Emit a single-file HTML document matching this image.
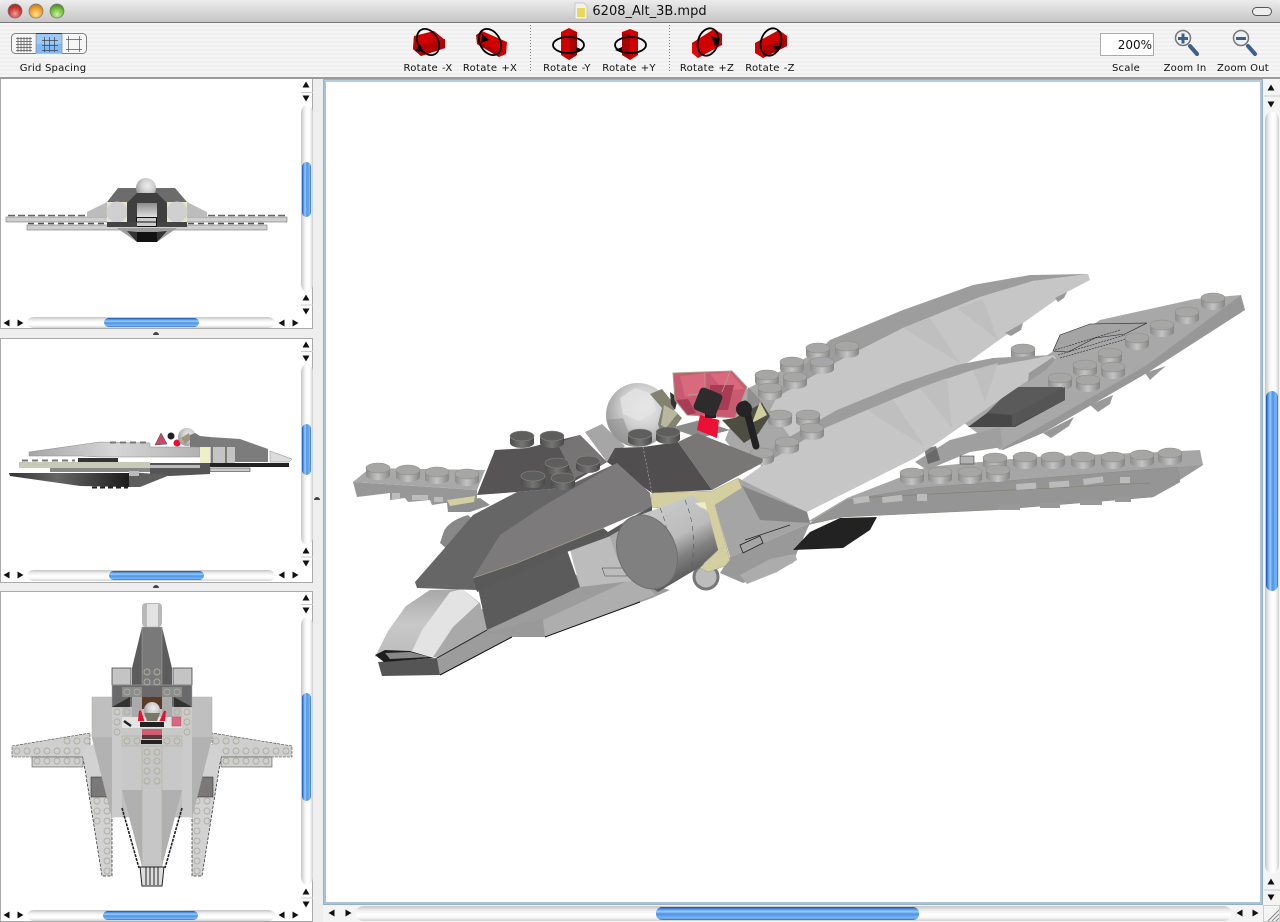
<!DOCTYPE html>
<html><head><meta charset="utf-8"><title>6208_Alt_3B.mpd</title>
<style>
html,body{margin:0;padding:0;background:#eee;}
body{width:1280px;height:922px;position:relative;overflow:hidden;font-family:"DejaVu Sans","Liberation Sans",sans-serif;}
.a{position:absolute}
.lbl{position:absolute;top:63px;font-size:10px;line-height:12px;color:#111;text-align:center;white-space:nowrap;transform:translateX(-50%);letter-spacing:.22px}
.rt{letter-spacing:.3px;word-spacing:.5px}
.vt{position:absolute;background:linear-gradient(90deg,#c4c4c4,#f0f0f0 30%,#fff 55%,#fafafa 75%,#d0d0d0);border-radius:6px/8px}
.ht{position:absolute;background:linear-gradient(180deg,#c4c4c4,#f0f0f0 30%,#fff 55%,#fafafa 75%,#d0d0d0);border-radius:8px/6px}
.vb{position:absolute;border-radius:6px;background:linear-gradient(90deg,#0f4fb5,#5f9fe8 20%,#9ccaf6 35%,#4d93e6 55%,#79baf8 85%,#2f6cc0);}
.hb{position:absolute;border-radius:6px;background:linear-gradient(180deg,#0f4fb5,#5f9fe8 20%,#9ccaf6 35%,#4d93e6 55%,#79baf8 85%,#2f6cc0);}
</style></head><body>
<div class="a" style="left:0;top:0;width:1280px;height:22px;background:linear-gradient(#ececec,#c6c6c6);border-bottom:1px solid #777;border-radius:6px 6px 0 0"></div>
<div class="a" style="left:0;top:23px;width:1280px;height:54px;background:repeating-linear-gradient(#f5f5f5 0,#f5f5f5 2px,#efefef 2px,#efefef 4px)"></div>
<div class="a" style="left:0;top:77px;width:1280px;height:2px;background:#9a9a9a"></div>
<div class="a" style="left:0;top:3px;width:1280px;text-align:center;font-size:13px;line-height:18px;color:#111"><span style="margin-left:19px">6208_Alt_3B.mpd</span></div>
<div class="lbl" style="left:53px">Grid Spacing</div>
<div class="lbl rt" style="left:428px">Rotate -X</div>
<div class="lbl rt" style="left:490px">Rotate +X</div>
<div class="lbl rt" style="left:567px">Rotate -Y</div>
<div class="lbl rt" style="left:629px">Rotate +Y</div>
<div class="lbl rt" style="left:707px">Rotate +Z</div>
<div class="lbl rt" style="left:770px">Rotate -Z</div>
<div class="lbl" style="left:1126px">Scale</div>
<div class="lbl" style="left:1185px">Zoom In</div>
<div class="lbl" style="left:1243px">Zoom Out</div>
<div class="a" style="left:1100px;top:33px;width:52px;height:21px;background:#fff;border:1px solid #aaa;font-size:12px;line-height:22px;text-align:right;color:#111;box-sizing:content-box"><span style="padding-right:1px">200%</span></div>

<!-- panels -->
<div class="a" style="left:0;top:79px;width:313px;height:250px;background:#fff;border-left:1px solid #aaa;border-right:1px solid #aaa;border-bottom:1px solid #aaa;box-sizing:border-box"></div>
<div class="a" style="left:0;top:338px;width:313px;height:245px;background:#fff;border:1px solid #aaa;box-sizing:border-box"></div>
<div class="a" style="left:0;top:591px;width:313px;height:331px;background:#fff;border:1px solid #aaa;box-sizing:border-box"></div>
<div class="a" style="left:323px;top:79px;width:940px;height:826px;background:#fff;border:3px solid #a9c2dc;border-top-color:#b8cde2;box-sizing:border-box;outline:1px solid #9cb0c4;outline-offset:-1px"></div>

<!-- scroll tracks -->
<div class="vt" style="left:301px;top:105px;width:12px;height:187px"></div>
<div class="vb" style="left:302px;top:162px;width:9px;height:55px"></div>
<div class="ht" style="left:27px;top:317px;width:248px;height:11px"></div>
<div class="hb" style="left:104px;top:318px;width:95px;height:9px"></div>
<div class="vt" style="left:301px;top:364px;width:12px;height:181px"></div>
<div class="vb" style="left:302px;top:424px;width:9px;height:51px"></div>
<div class="ht" style="left:27px;top:570px;width:248px;height:11px"></div>
<div class="hb" style="left:109px;top:571px;width:95px;height:9px"></div>
<div class="vt" style="left:301px;top:617px;width:12px;height:268px"></div>
<div class="vb" style="left:302px;top:693px;width:9px;height:108px"></div>
<div class="ht" style="left:27px;top:910px;width:248px;height:11px"></div>
<div class="hb" style="left:103px;top:911px;width:95px;height:9px"></div>
<div class="a" style="left:1263px;top:79px;width:17px;height:843px;background:#f4f4f4"></div>
<div class="a" style="left:323px;top:905px;width:957px;height:17px;background:#f4f4f4"></div>
<div class="vt" style="left:1265px;top:112px;width:14px;height:761px"></div>
<div class="vb" style="left:1266px;top:391px;width:12px;height:200px"></div>
<div class="ht" style="left:356px;top:906px;width:875px;height:15px"></div>
<div class="hb" style="left:656px;top:907px;width:263px;height:13px"></div>

<svg class="a" style="left:0;top:0" width="1280" height="922" viewBox="0 0 1280 922" xmlns="http://www.w3.org/2000/svg">
<defs>
<radialGradient id="rr" cx=".5" cy=".7" r=".75"><stop offset="0" stop-color="#f2a09a"/><stop offset=".55" stop-color="#cc3a34"/><stop offset="1" stop-color="#8f2420"/></radialGradient>
<radialGradient id="yy" cx=".5" cy=".75" r=".75"><stop offset="0" stop-color="#ffe08a"/><stop offset=".6" stop-color="#f0a030"/><stop offset="1" stop-color="#b87a20"/></radialGradient>
<radialGradient id="gg" cx=".5" cy=".75" r=".75"><stop offset="0" stop-color="#c8f4a0"/><stop offset=".6" stop-color="#74bb3c"/><stop offset="1" stop-color="#468424"/></radialGradient>
<radialGradient id="hl" cx=".58" cy=".38" r=".72"><stop offset="0" stop-color="#ececec"/><stop offset=".45" stop-color="#cfcfcf"/><stop offset="1" stop-color="#8c8c8c"/></radialGradient>
<linearGradient id="sg" x1="0" x2="1" y1="0" y2="0"><stop offset="0" stop-color="#8c8c8c"/><stop offset=".5" stop-color="#c4c4c4"/><stop offset="1" stop-color="#858585"/></linearGradient>
<linearGradient id="sd" x1="0" x2="1" y1="0" y2="0"><stop offset="0" stop-color="#4e4d4d"/><stop offset=".5" stop-color="#767575"/><stop offset="1" stop-color="#4a4949"/></linearGradient>
<linearGradient id="blk" x1="0" x2="1" y1="0" y2="0"><stop offset="0" stop-color="#333"/><stop offset=".4" stop-color="#666"/><stop offset="1" stop-color="#1c1c1c"/></linearGradient>
<linearGradient id="cab" x1="0" x2="0" y1="0" y2="1"><stop offset="0" stop-color="#8a8a8a"/><stop offset="1" stop-color="#e0e0e0"/></linearGradient>
<linearGradient id="w2" x1="0" x2="1" y1="0" y2="0"><stop offset="0" stop-color="#a6a6a6"/><stop offset=".5" stop-color="#d6d6d6"/><stop offset="1" stop-color="#b2b2b2"/></linearGradient>
<linearGradient id="cone" x1="0" x2="0" y1="0" y2="1"><stop offset="0" stop-color="#a8a8a8"/><stop offset=".5" stop-color="#c8c8c8"/><stop offset="1" stop-color="#bcbcbc"/></linearGradient>
<linearGradient id="cyl" x1="0" y1="0" x2=".45" y2="1"><stop offset="0" stop-color="#d0d0d0"/><stop offset=".55" stop-color="#bcbcbc"/><stop offset=".74" stop-color="#808080"/><stop offset="1" stop-color="#505050"/></linearGradient>
<g id="st"><path d="M-12 0V7A12 5 0 0 0 12 7V0Z" fill="url(#sg)"/><ellipse rx="12" ry="5" fill="#a6a6a6" stroke="#8d8d7e" stroke-width=".6"/></g>
<g id="sk"><path d="M-12 0V7A12 5 0 0 0 12 7V0Z" fill="url(#sd)"/><ellipse rx="12" ry="5" fill="#5f5e5e" stroke="#8d8d7e" stroke-width=".6"/></g>
<g id="c"><circle r="3" fill="none" stroke="#afaf9f" stroke-width=".9"/></g>
<g id="ua"><path d="M0-3.5L3.5 2.5H-3.5Z" fill="#111"/></g>
<g id="da"><path d="M0 3.5L3.5-2.5H-3.5Z" fill="#111"/></g>
<g id="la"><path d="M-3.5 0L2.5-3.5V3.5Z" fill="#111"/></g>
<g id="ra"><path d="M3.5 0L-2.5-3.5V3.5Z" fill="#111"/></g>
<clipPath id="hc"><circle cx="638" cy="415" r="32"/></clipPath>
</defs>

<!-- window controls -->
<circle cx="15" cy="11" r="7" fill="url(#rr)" stroke="#777" stroke-width=".7"/>
<circle cx="36" cy="11" r="7" fill="url(#yy)" stroke="#777" stroke-width=".7"/>
<circle cx="57" cy="11" r="7" fill="url(#gg)" stroke="#777" stroke-width=".7"/>
<rect x="1252.500" y="7.500" width="19" height="8" rx="4" fill="#eee" stroke="#555"/>
<path d="M575 3h9l3 3v13h-12Z" fill="#f2f2f2" stroke="#bbb" stroke-width=".7"/><rect x="577" y="8" width="8" height="9" fill="#e8d95a"/>

<!-- grid control -->
<rect x="11.500" y="33.500" width="75" height="20" rx="4" fill="#f6f6f6" stroke="#808080"/>
<rect x="36" y="33" width="26" height="21" fill="#9cc8f8"/><rect x="36" y="33" width="26" height="1" fill="#123a90"/><rect x="36" y="44" width="26" height="9" fill="#7fb9fa"/>
<path d="M36 34V53M62 34V53" stroke="#888" stroke-width=".7"/>
<path d="M16 38.500h16M16 41.500h16M16 44.500h16M16 47.500h16M16 50.500h16M18 37v15M21 37v15M24 37v15M27 37v15M30 37v15" stroke="#555" stroke-width=".7"/>
<path d="M42 40.500h16M42 45.500h16M42 50.500h16M44.500 37v15M49.500 37v15M54.500 37v15" stroke="#444" stroke-width=".7"/>
<path d="M66 39.500h16M66 49.500h16M68.500 36v16M79.500 36v16" stroke="#555" stroke-width=".7"/>

<!-- separators -->
<path d="M530.500 25V73M669.500 25V73" stroke="#888" stroke-dasharray="1 2"/>

<!-- rotate icons -->
<g>
<path d="M414 36l20-5 11 9v8l-24 8-8-7Z" fill="#d00000"/><path d="M421 56V45l24-6v9Z" fill="#b00000"/><path d="M414 36l7 9v11l-8-7Z" fill="#c00000"/>
<ellipse cx="428" cy="42" rx="10" ry="14" transform="rotate(-30 428 42)" fill="none" stroke="#000" stroke-width="1.800"/><path d="M415 51l5-7 3 8Z" fill="#000"/>
<path d="M476 35l6-4 25 11-1 12-7 3-22-13Z" fill="#d00000"/><path d="M477 40l22 12v5l-22-13Z" fill="#a80000"/>
<ellipse cx="490" cy="42" rx="10" ry="14" transform="rotate(-30 490 42)" fill="none" stroke="#000" stroke-width="1.800"/><path d="M482 34l7 6-8 3Z" fill="#000"/>
<path d="M561 32l8-4 8 4v23l-8 5-8-5Z" fill="#d00000"/><path d="M569 33l8-1v23l-8 5Z" fill="#a80000"/>
<path d="M553 45a15.500 8 0 0 1 31 0M584 45a15.500 8 0 0 1-31 0" fill="none" stroke="#000" stroke-width="1.800"/><path d="M576 47l7 3-7 3Z" fill="#000"/>
<path d="M622 32l8-3 8 3v23l-8 5-8-5Z" fill="#d00000"/><path d="M622 33l8 1v25l-8-4Z" fill="#a80000"/>
<path d="M615 45a15.500 8 0 0 1 31 0M646 45a15.500 8 0 0 1-31 0" fill="none" stroke="#000" stroke-width="1.800"/><path d="M622 47l-7 3 7 3Z" fill="#000"/>
<path d="M692 43l22-14 8 5v11l-24 13-6-5Z" fill="#d00000"/><path d="M692 43l6 5v10l-6-5Z" fill="#e00a0a"/>
<ellipse cx="708" cy="42" rx="10" ry="14" transform="rotate(18 708 42)" fill="none" stroke="#000" stroke-width="1.800"/><path d="M711 36l9 3-5 7Z" fill="#000"/>
<path d="M755 43l24-13 8 6v10l-24 12-8-5Z" fill="#d00000"/><path d="M763 47l24-10v9l-24 12Z" fill="#a80000"/>
<ellipse cx="771" cy="42" rx="10" ry="14" transform="rotate(18 771 42)" fill="none" stroke="#000" stroke-width="1.800"/><path d="M773 46l8 0-3 6Z" fill="#000"/>
</g>

<!-- zoom icons -->
<g>
<path d="M1190 46l7 8" stroke="#3d5f8c" stroke-width="4" stroke-linecap="round"/>
<circle cx="1183" cy="38" r="7.500" fill="#eef2f6" stroke="#777" stroke-width="1.500"/>
<path d="M1178 38.500h10M1183 33.500v10" stroke="#3d5f8c" stroke-width="3"/>
<path d="M1248 46l7 8" stroke="#3d5f8c" stroke-width="4" stroke-linecap="round"/>
<circle cx="1241" cy="38" r="7.500" fill="#eef2f6" stroke="#777" stroke-width="1.500"/>
<path d="M1236 38.500h10" stroke="#3d5f8c" stroke-width="3"/>
</g>

<!-- splitter dimples -->
<path d="M153 335a3 3 0 0 1 6 0Z M153 588a3 3 0 0 1 6 0Z M314 500a3 3 0 0 1 6 0Z" fill="#444"/>

<!-- scroll arrows -->
<g>
<use href="#ua" x="306" y="85"/><use href="#da" x="306" y="98"/><use href="#ua" x="306" y="298"/><use href="#da" x="306" y="311"/>
<use href="#la" x="7" y="323"/><use href="#ra" x="20" y="323"/><use href="#la" x="282" y="323"/><use href="#ra" x="295" y="323"/>
<use href="#ua" x="306" y="345"/><use href="#da" x="306" y="358"/><use href="#ua" x="306" y="551"/><use href="#da" x="306" y="563"/>
<use href="#la" x="7" y="575"/><use href="#ra" x="20" y="575"/><use href="#la" x="282" y="575"/><use href="#ra" x="295" y="575"/>
<use href="#ua" x="306" y="598"/><use href="#da" x="306" y="610"/><use href="#ua" x="306" y="892"/><use href="#da" x="306" y="904"/>
<use href="#la" x="7" y="915"/><use href="#ra" x="20" y="915"/><use href="#la" x="282" y="915"/><use href="#ra" x="295" y="915"/>
<use href="#ua" x="1271" y="88"/><use href="#da" x="1271" y="104"/><use href="#ua" x="1271" y="882"/><use href="#da" x="1271" y="897"/>
<use href="#la" x="332" y="913"/><use href="#ra" x="348" y="913"/><use href="#la" x="1240" y="913"/><use href="#ra" x="1255" y="913"/>
<path d="M301 92.500h12M301 305h12M301 351.500h12M301 557h12M301 604.500h12M301 898h12M1264 96h16M1264 890h16" stroke="#ccc"/>
<path d="M1268 921l11-11M1272 921l7-7M1276 921l3-3" stroke="#888"/>
<rect x="1263.500" y="905.500" width="16" height="16" fill="none" stroke="#ccc"/>
</g>

<!-- panel 1: front view -->
<g>
<rect x="6" y="217" width="281" height="5" fill="#cfcfcf" stroke="#777" stroke-width=".6"/>
<rect x="27" y="225" width="240" height="5" fill="#cfcfcf" stroke="#777" stroke-width=".6"/>
<path d="M8 215.500H285" stroke="#666" stroke-width="1.500" stroke-dasharray="7 3"/>
<path d="M28 223.500H265" stroke="#555" stroke-width="1.500" stroke-dasharray="6 4"/>
<path d="M87 212l20-10v15H87Z M207 212l-20-10v15h20Z" fill="#bcbcbc"/>
<path d="M107 202l11-14h57l12 14v15H107Z" fill="#6d6c6c"/>
<circle cx="146" cy="188" r="10" fill="url(#hl)"/>
<rect x="107" y="202" width="20" height="20" fill="#e8e6c4"/><rect x="167" y="202" width="20" height="20" fill="#e8e6c4"/>
<circle cx="117" cy="212" r="10.500" fill="#d0d0d0"/><circle cx="177" cy="212" r="10.500" fill="#d0d0d0"/>
<path d="M127 203l10-10h20l10 10v20h-40Z" fill="#3f3f3f"/>
<path d="M137 203h20v14h-20Z" fill="url(#cab)"/>
<rect x="136.500" y="217.500" width="20" height="9" fill="#ccc" stroke="#111"/><path d="M136 222h21" stroke="#111"/>
<path d="M107 222h30v5h-30Z M157 222h30v5h-30Z" fill="#444"/>
<path d="M117 228h60l-20 14h-20Z" fill="#9c9c9c"/>
<path d="M137 232h20v10h-20Z" fill="#111"/><path d="M127 231l10 1v10Z M167 231l-10 1v10Z" fill="#333"/>
</g>

<!-- panel 2: side view -->
<g>
<path d="M29 452L100 442l50 1v4h50v10H100l-20-1H29Z" fill="url(#w2)" stroke="#888" stroke-width=".5"/>
<path d="M210 437l30 2 28 10v13h-58Z" fill="#7d7c7c"/>
<path d="M270 451l22 8-3 3h-19Z" fill="#dcdcdc" stroke="#888" stroke-width=".5"/>
<path d="M200 447h35v18h-35Z" fill="#c4c4c4"/><rect x="200" y="447" width="10" height="18" fill="#f0efc8"/><path d="M212 447v18M226 447v18" stroke="#333"/>
<rect x="210" y="463" width="79" height="4" fill="#222"/>
<rect x="210" y="468" width="40" height="3.500" fill="#ccc" stroke="#444" stroke-width=".6"/>
<rect x="78" y="458" width="40" height="8" fill="#333"/>
<rect x="19" y="462" width="131" height="6" fill="#c9c9ba"/>
<path d="M22 460.500H75" stroke="#777" stroke-width="2" stroke-dasharray="6 4"/>
<rect x="50" y="468" width="100" height="4" fill="#888"/>
<path d="M150 463h60v11l-40 2h-20Z" fill="#555"/><rect x="150" y="465" width="50" height="3" fill="#bbb"/>
<path d="M9 473H129v14l-49-1L10 476Z" fill="url(#blk)"/>
<path d="M129 472l41 3-30 12h-11Z" fill="#5e5e5e"/><rect x="129" y="471" width="10" height="5" fill="#bbb"/>
<path d="M92 487.500H128" stroke="#222" stroke-width="2" stroke-dasharray="5 3"/>
<path d="M155 445l6-12 6 11Z" fill="#c84a62" stroke="#444" stroke-width=".5"/>
<circle cx="171" cy="436" r="3.500" fill="#222"/><circle cx="177" cy="443" r="3.500" fill="#ec1030"/>
<circle cx="187" cy="437" r="9" fill="url(#hl)"/><path d="M181 438l8-5 2 6-6 5Z" fill="#9a9878"/>
<path d="M110 442.500H150" stroke="#777" stroke-width="2" stroke-dasharray="6 4"/>
<path d="M190 442v-7l5-2 5 3 10 1v10h-20Z" fill="#777"/>
</g>

<!-- panel 3: top view -->
<g>
<path d="M12 746L90 733V757H12Z M292 746L212 733V757h80Z" fill="#cfcfcf" stroke="#444" stroke-width=".6" stroke-dasharray="3 1"/>
<rect x="32" y="757" width="51" height="10" fill="#cfcfcf" stroke="#555" stroke-width=".6"/><rect x="221" y="757" width="51" height="10" fill="#cfcfcf" stroke="#555" stroke-width=".6"/>
<path d="M83 757l19 119h10V757Z M221 757l-19 119h-10V757Z" fill="#d2d2d2" stroke="#222" stroke-width=".7" stroke-dasharray="3 1.500"/>
<circle cx="96" cy="757" r="13" fill="#d2d2d2"/><circle cx="208" cy="757" r="13" fill="#d2d2d2"/>
<rect x="91" y="777" width="21" height="20" fill="#7b7878" stroke="#222" stroke-width=".5"/><rect x="192" y="777" width="21" height="20" fill="#7b7878" stroke="#222" stroke-width=".5"/>
<path d="M92 697H212V737L192 817H112L92 737Z" fill="#bfbfbf" stroke="#b5b5a5" stroke-width=".6"/>
<path d="M92 737L112 817V737Z M212 737L192 817V737Z" fill="#b2b2b2"/>
<rect x="112" y="697" width="10" height="120" fill="#cbcbcb"/><rect x="182" y="697" width="10" height="120" fill="#cbcbcb"/>
<path d="M122 728H182V790l-20 76h-20l-20-76Z" fill="#c8c8c8"/>
<path d="M122 790l20 76V790Z M182 790l-20 76V790Z" fill="#b0b0b0"/>
<rect x="142" y="746" width="20" height="121" fill="#c6c6c6" stroke="#afaf9f" stroke-width=".6"/>
<path d="M122 808L139 868 M182 808L165 868" stroke="#222" stroke-width="1.600" stroke-dasharray="3 1"/>
<path d="M140 867h24l-2 19h-20Z" fill="#ddd" stroke="#222"/><path d="M146 867v18M150 867v18M154 867v18M158 867v18" stroke="#222"/>
<rect x="142" y="603" width="20" height="24" rx="4" fill="#b8b8b8"/><rect x="147" y="604" width="11" height="23" fill="#e2e2e2"/>
<path d="M142 627h20l10 41v29h-40v-29Z" fill="#5c5c5c"/><rect x="142" y="627" width="20" height="70" fill="#7a7979" stroke="#a8a898" stroke-width=".5"/>
<rect x="112" y="668" width="19" height="17" fill="#c4c4c4" stroke="#333" stroke-width=".7"/><rect x="173" y="668" width="19" height="17" fill="#c4c4c4" stroke="#333" stroke-width=".7"/>
<rect x="112" y="685" width="80" height="22" fill="#6a6a6a" stroke="#aaa" stroke-width=".5"/>
<rect x="122" y="687" width="20" height="10" fill="#8c8c8c"/><rect x="162" y="687" width="20" height="10" fill="#8c8c8c"/>
<path d="M112 707l18-10v10Z M192 707l-18-10v10Z" fill="#333"/>
<rect x="142" y="697" width="20" height="12" fill="#5d3a26"/>
<rect x="132" y="697" width="10" height="30" fill="#aaa"/><rect x="162" y="697" width="10" height="30" fill="#aaa"/>
<rect x="122" y="717" width="60" height="11" fill="#e4e4e4"/>
<path d="M140 711l-1 9h4Z M165 711l-1 9h-3Z" fill="#e8102c" stroke="#e8102c" stroke-width="2"/>
<circle cx="152" cy="710" r="8" fill="url(#hl)"/><path d="M144 713h16l-3 8h-10Z" fill="#77776a"/>
<rect x="140" y="722" width="24" height="5" fill="#222"/>
<rect x="172" y="717" width="9" height="9" fill="#d66a82" stroke="#c04a66" stroke-width=".6"/>
<path d="M124 721l7 5" stroke="#222" stroke-width="2.500"/>
<rect x="122" y="736" width="60" height="10" fill="#c6c6c6" stroke="#afaf9f" stroke-width=".6"/>
<rect x="142" y="729" width="20" height="9" fill="#cf5c70"/><rect x="142" y="735" width="20" height="4" fill="#5a3a3e"/>
<rect x="141" y="740" width="21" height="4" fill="#222"/>
<g>
<use href="#c" x="17" y="751"/><use href="#c" x="27" y="751"/><use href="#c" x="37" y="751"/><use href="#c" x="47" y="751"/><use href="#c" x="57" y="751"/><use href="#c" x="67" y="751"/><use href="#c" x="77" y="751"/><use href="#c" x="67" y="741"/><use href="#c" x="77" y="741"/><use href="#c" x="87" y="741"/>
<use href="#c" x="37" y="761"/><use href="#c" x="47" y="761"/><use href="#c" x="57" y="761"/><use href="#c" x="67" y="761"/><use href="#c" x="77" y="761"/>
<use href="#c" x="286" y="751"/><use href="#c" x="276" y="751"/><use href="#c" x="266" y="751"/><use href="#c" x="256" y="751"/><use href="#c" x="246" y="751"/><use href="#c" x="236" y="751"/><use href="#c" x="226" y="751"/><use href="#c" x="236" y="741"/><use href="#c" x="226" y="741"/><use href="#c" x="216" y="741"/>
<use href="#c" x="266" y="761"/><use href="#c" x="256" y="761"/><use href="#c" x="246" y="761"/><use href="#c" x="236" y="761"/><use href="#c" x="226" y="761"/>
<use href="#c" x="97" y="801"/><use href="#c" x="107" y="801"/><use href="#c" x="97" y="811"/><use href="#c" x="107" y="811"/><use href="#c" x="97" y="821"/><use href="#c" x="107" y="821"/><use href="#c" x="107" y="831"/><use href="#c" x="107" y="841"/><use href="#c" x="107" y="851"/><use href="#c" x="107" y="861"/><use href="#c" x="107" y="871"/>
<use href="#c" x="197" y="801"/><use href="#c" x="207" y="801"/><use href="#c" x="197" y="811"/><use href="#c" x="207" y="811"/><use href="#c" x="197" y="821"/><use href="#c" x="207" y="821"/><use href="#c" x="197" y="831"/><use href="#c" x="197" y="841"/><use href="#c" x="197" y="851"/><use href="#c" x="197" y="861"/><use href="#c" x="197" y="871"/>
<use href="#c" x="147" y="752"/><use href="#c" x="157" y="752"/><use href="#c" x="147" y="761"/><use href="#c" x="157" y="761"/><use href="#c" x="147" y="771"/><use href="#c" x="157" y="771"/><use href="#c" x="147" y="781"/><use href="#c" x="157" y="781"/>
<use href="#c" x="147" y="672"/><use href="#c" x="157" y="672"/><use href="#c" x="147" y="682"/><use href="#c" x="157" y="682"/>
<use href="#c" x="127" y="692"/><use href="#c" x="137" y="692"/><use href="#c" x="167" y="692"/><use href="#c" x="177" y="692"/>
<use href="#c" x="117" y="712"/><use href="#c" x="127" y="712"/><use href="#c" x="117" y="722"/><use href="#c" x="117" y="732"/><use href="#c" x="187" y="712"/><use href="#c" x="177" y="712"/><use href="#c" x="187" y="722"/><use href="#c" x="187" y="732"/>
<use href="#c" x="127" y="741"/><use href="#c" x="137" y="741"/><use href="#c" x="167" y="741"/><use href="#c" x="177" y="741"/>
</g>
</g>

<!-- MAIN SHIP -->
<!-- base plate under wings -->
<path d="M745 390L830 345 880 372 800 440 750 470 725 440Z" fill="#a8a8a8"/>
<!-- rear upper plate -->
<path d="M1241 295L1245 310 1147 373 1043 433 1003 450 980 440 1060 380Z" fill="#979797"/>
<path d="M1241 295L1195 299 1100 320 1040 360 960 420 1000 450 1147 365Z" fill="#a8a8a8"/>
<path d="M1145 373l5 7 10-9 6-5ZM1090 405l8 7 12-8 3-9ZM1043 433l8 5 18-12 5-9Z" fill="#999"/>
<path d="M1060 335l30-11 57-1-22 11-30 4-27 14-15-1Z" fill="#a4a4a4" stroke="#222" stroke-width=".6"/>
<path d="M1055 350L1120 330M1058 355L1125 335M1060 358L1130 338" stroke="#222" stroke-width=".6" stroke-dasharray="2 1"/>
<g><use href="#st" x="1213" y="298"/><use href="#st" x="1187" y="312"/><use href="#st" x="1162" y="325"/><use href="#st" x="1137" y="338"/><use href="#st" x="1110" y="353"/><use href="#st" x="1113" y="367"/><use href="#st" x="1085" y="365"/><use href="#st" x="1088" y="380"/><use href="#st" x="1060" y="378"/><use href="#st" x="1023" y="349"/></g>
<!-- back wing -->
<path d="M1088 274L1090 280 1067 292 1023 323 960 368 880 420 800 450 770 410 777 397 840 360 903 328 980 297 1033 281Z" fill="#c6c6c7"/>
<path d="M1088 274L1030 275 973 285 903 310 830 340 777 392 777 397 840 360 903 328 980 297 1033 281Z" fill="#9d9d9d"/>
<path d="M903 328L930 318 960 363ZM957 308L983 299 998 340Z" fill="#bfbfc0"/>
<path d="M1067 292l-3 6-6 4-3-4ZM1023 323l-2 7-10 6-6-3Z" fill="#999"/>
<g><use href="#st" x="847" y="346"/><use href="#st" x="818" y="348"/><use href="#st" x="822" y="362"/><use href="#st" x="792" y="362"/><use href="#st" x="795" y="377"/><use href="#st" x="767" y="375"/><use href="#st" x="770" y="388"/></g>
<!-- lower right plate -->
<path d="M1200 450L1203 465 1153 497 993 510 843 517 807 522 847 498 927 467 1033 457 1160 452Z" fill="#a6a6a6"/>
<path d="M1177 467L1203 465 1153 497Z" fill="#9a9a9a"/>
<path d="M847 500L920 488 1177 467 1180 482 1153 497 993 510 843 517 807 525Z" fill="#959595" stroke="#868676" stroke-width=".4"/>
<path d="M855 498L1150 483" stroke="#81816f" stroke-width=".7"/>
<rect x="1016" y="484" width="20" height="6" fill="#bbb" transform="rotate(-4 1016 484)"/><rect x="1049" y="482" width="20" height="6" fill="#bbb" transform="rotate(-4 1049 482)"/><rect x="1083" y="479" width="20" height="6" fill="#bbb" transform="rotate(-8 1083 479)"/><rect x="1120" y="477" width="10" height="6" fill="#bbb"/>
<rect x="853" y="498" width="16" height="6" fill="#bbb" transform="rotate(-8 853 498)"/><rect x="882" y="497" width="20" height="6" fill="#bbb" transform="rotate(-6 882 497)"/><rect x="917" y="494" width="10" height="7" fill="#bbb"/>
<path d="M1000 510v-5h20v5ZM1040 508v-5h20v5ZM1080 505v-5h22v5ZM1115 502v-5h16v5Z" fill="#999"/>
<g><use href="#st" x="1170" y="453"/><use href="#st" x="1142" y="455"/><use href="#st" x="1113" y="457"/><use href="#st" x="1083" y="457"/><use href="#st" x="1053" y="457"/><use href="#st" x="1025" y="457"/><use href="#st" x="995" y="458"/><use href="#st" x="998" y="470"/><use href="#st" x="970" y="472"/><use href="#st" x="940" y="472"/><use href="#st" x="912" y="473"/></g>
<!-- fan and dark block -->
<path d="M1000 427L1003 447 970 452 927 470 915 462 950 440Z" fill="#9f9f9f"/>
<path d="M924 449l12-3 4 14-12 4Z" fill="#5c5c5c" opacity=".8"/>
<rect x="960" y="456" width="14" height="8" fill="#b2b2b2" stroke="#222" stroke-width=".5"/>
<path d="M968 427L987 413 1013 387 1063 387 1065 400 1015 427Z" fill="#484747"/>
<path d="M1013 387L1063 387 1065 393 1012 415 987 413Z" fill="#5b5a5a"/>
<path d="M1012 415V427L1065 400V387Z" fill="#555"/>
<!-- front wing -->
<path d="M1053 355L1056 358 1046 368 960 427 917 457 807 512 742 480 760 467 820 430 867 410 920 388 973 370Z" fill="#c6c6c7"/>
<path d="M1053 355L993 358 957 365 903 383 837 410 775 445 760 467 820 430 867 410 920 388 973 370Z" fill="#9d9d9d"/>
<path d="M867 410L893 400 925 447ZM920 388L947 378 952 428ZM973 370L998 363 985 402Z" fill="#bfbfc0"/>
<path d="M1053 357l2 3-8 9-19 13 1-9Z" fill="#999"/>
<g><use href="#st" x="808" y="415"/><use href="#st" x="812" y="428"/><use href="#st" x="780" y="415"/><use href="#st" x="787" y="442"/><use href="#st" x="762" y="453"/></g>
<!-- grey plate left of helmet -->
<path d="M585 432L602 424 625 446 607 462Z" fill="#a6a6a6"/>
<!-- helmet -->
<circle cx="638" cy="415" r="32" fill="url(#hl)"/>
<g clip-path="url(#hc)"><path d="M620 398l15-10 17 6 4 17-17 10-16-7Z" fill="#e4e4e4" opacity=".8"/><path d="M606 420l17-2 12 30h-15Z" fill="#909090" opacity=".55"/></g>
<path d="M650 394l12-5 8 10 6 5-2 6 8 8-12 16-8 4-4-14 4-16Z" fill="#82826f"/><path d="M664 405l14 8-12 15-5-3Z" fill="#b8b8a0"/><path d="M670 392l8 6-3 12-4-6Z" fill="#333"/>
<!-- canopy -->
<path d="M673 373L732 371 747 387 735 418 687 415 675 400Z" fill="#c85a72" stroke="#a8a48a" stroke-width="1"/>
<path d="M680 376l25-3v22l-20 2ZM710 374l20-2 14 17-20 2Z" fill="#d96a7d"/>
<path d="M676 400l12-1 8 14-8 2ZM710 385h24l-6 25h-18Z" fill="#a83c56"/>
<path d="M688 395l24-2M730 372l-8 20M705 373v20" stroke="#a8a48a" stroke-width=".8" fill="none"/>
<path d="M748 387l15 16 -3 14-14 1Z" fill="#8f8f8f"/>
<path d="M735 418L762 403 770 416 758 434 744 443 722 420Z" fill="#4d4d42"/>
<path d="M760 402l7 13-15 8Z" fill="#d2cd9f"/>
<path d="M670 428l30-8 30 10-30 8Z" fill="#8a8a8a"/>
<path d="M745 404l11 42" stroke="#222" stroke-width="7" stroke-linecap="round"/><circle cx="744" cy="409" r="8" fill="#242424"/>
<path d="M700 415L719 420 717 438 697 430Z" fill="#ee1034"/>
<rect x="705" y="407" width="11" height="11" fill="#222"/>
<rect x="696" y="390" width="24" height="24" rx="4" fill="#2c2c2c" transform="rotate(22 708 402)"/>
<!-- left plate -->
<path d="M468 515c-10 3-20 8-24 16l-4 12 8 7 30-25Z" fill="#888"/>
<path d="M353 482L357 497 390 493 390 500 405 498 408 502 430 500 432 505 445 503 477 503 477 490Z" fill="#979797"/>
<path d="M353 482L370 468 485 470 477 490Z" fill="#a8a8a8"/>
<path d="M447 503L448 512 470 512 490 505 480 498Z" fill="#8e8e8e"/>
<path d="M392 493h8v6h-8ZM412 495h16v5h-16ZM434 497h9v5h-9Z" fill="#bcbcbc"/>
<g><use href="#st" x="378" y="468"/><use href="#st" x="408" y="470"/><use href="#st" x="437" y="472"/><use href="#st" x="467" y="474"/></g>
<!-- rear body -->
<path d="M715 505L738 478 807 512 810 523 730 557Z" fill="#a5a5a5"/>
<path d="M742 486L807 512 810 523 760 520Z" fill="#858585"/>
<path d="M730 557L810 523 798 550 793 563 743 583 720 573Z" fill="#999"/>
<path d="M810 532L840 518 877 517 870 530 843 548 793 550Z" fill="#222"/>
<path d="M760 536l-20 9 3 8 20-10Z" fill="none" stroke="#222" stroke-width=".8"/>
<path d="M745 540L790 525" stroke="#222" stroke-width=".7"/>
<path d="M740 575l30-16 25-5 2 6-20 12-30 12Z" fill="#acacac"/>
<circle cx="706" cy="577" r="12" fill="#bcbcbc" stroke="#777" stroke-width="3"/>
<!-- front-left block -->
<path d="M477 495L495 450 527 448 580 435 607 462 563 488 517 492Z" fill="#565454"/>
<path d="M557 443L580 435 607 462 575 478Z" fill="#767474"/>
<path d="M475 496l-28 4 3 6 24-4Z" fill="#d4cfa0"/>
<g><use href="#sk" x="522" y="436"/><use href="#sk" x="552" y="436"/></g>
<!-- right block -->
<path d="M607 462L615 448 643 447 678 442 712 490 652 493Z" fill="#504e4e"/>
<path d="M678 442L697 433 763 459 762 463 712 490Z" fill="#797676"/>
<path d="M643 447L652 493" stroke="#aaa" stroke-width=".7" stroke-dasharray="2 2"/>
<g><use href="#sk" x="640" y="434"/><use href="#sk" x="668" y="432"/></g>
<!-- tan frame -->
<path d="M652 493L712 491 738 478 742 488 715 505 730 560 725 566 708 572 700 568 718 550 708 513 650 507Z" fill="#d4cfa0" stroke="#a5a27e" stroke-width=".5"/>
<!-- underside -->
<path d="M437 658L440 675 512 637 545 637 652 598 670 590 590 570 480 610Z" fill="#9c9c9c"/>
<path d="M512 637L545 637 543 618 487 632Z" fill="#999"/>
<path d="M545 637L543 620 640 575 655 595Z" fill="#aeaeae"/>
<path d="M440 675L512 637M545 637L640 602" stroke="#111" stroke-width="1"/>
<!-- nose -->
<path d="M378 662L382 676 440 675 437 658Z" fill="#555"/>
<path d="M375 657L405 607 430 590 462 589 480 603 487 630 437 658 412 651 387 650Z" fill="#ababab"/>
<path d="M375 657L388 631 406 606 430 590 450 592 422 630 412 651 387 650Z" fill="url(#cone)"/>
<path d="M412 651L422 630 450 592 462 589 479 603 453 627 433 657Z" fill="#e3e3e3"/>
<path d="M479 603L487 630 437 658 453 627Z" fill="#a9a9a9"/>
<path d="M375 655l10-5 25 1 24 7-50 4Z" fill="#1d1d1d"/><path d="M385 653l25-1 20 5-40 2Z" fill="#888"/>
<path d="M437 658L487 630" stroke="#222" stroke-width="1"/>
<!-- big side -->
<path d="M478 588L567 550 580 587 487 630Z" fill="#5c5b5b"/>
<path d="M570 550L617 533 627 560 640 580 580 587Z" fill="#bcbcbc"/>
<path d="M608 532L652 505 640 520 618 560Z" fill="#aaa"/>
<path d="M602 568h25v8h-22Z" fill="#bcbcbc" stroke="#222" stroke-width=".4"/>
<!-- roof -->
<path d="M415 582L443 550 473 515 517 492 563 488 617 463 650 493 652 507 603 528 564 546 517 563 477 590 417 588Z" fill="#676666"/>
<path d="M473 578L500 535 542 507 617 463 650 493 652 507 603 528 517 563Z" fill="#7c7a7a"/>
<path d="M473 578L517 563 603 528 608 532 652 506 652 512 608 537 564 553 477 592Z" fill="#5a5959"/>
<path d="M473 578L517 563 603 528" stroke="#a09f88" stroke-width=".7" fill="none"/>
<g><use href="#sk" x="557" y="463"/><use href="#sk" x="588" y="461"/><use href="#sk" x="533" y="476"/><use href="#sk" x="563" y="478"/></g>
<!-- engine -->
<path d="M640 515L693 495 708 513 718 550 700 567 658 592 632 576Z" fill="url(#cyl)"/>
<path d="M685 500c6 15 12 35 6 72M660 508c8 18 10 35 8 75" stroke="#555" stroke-width=".6" fill="none" stroke-dasharray="5 4"/>
<path d="M695 503l10-1 2 8-7-3Z" fill="#efeccb"/>
<ellipse cx="647" cy="552" rx="29" ry="38" transform="rotate(-22 647 552)" fill="#808080" stroke="#6e6e6e"/>
</svg>
</body></html>
